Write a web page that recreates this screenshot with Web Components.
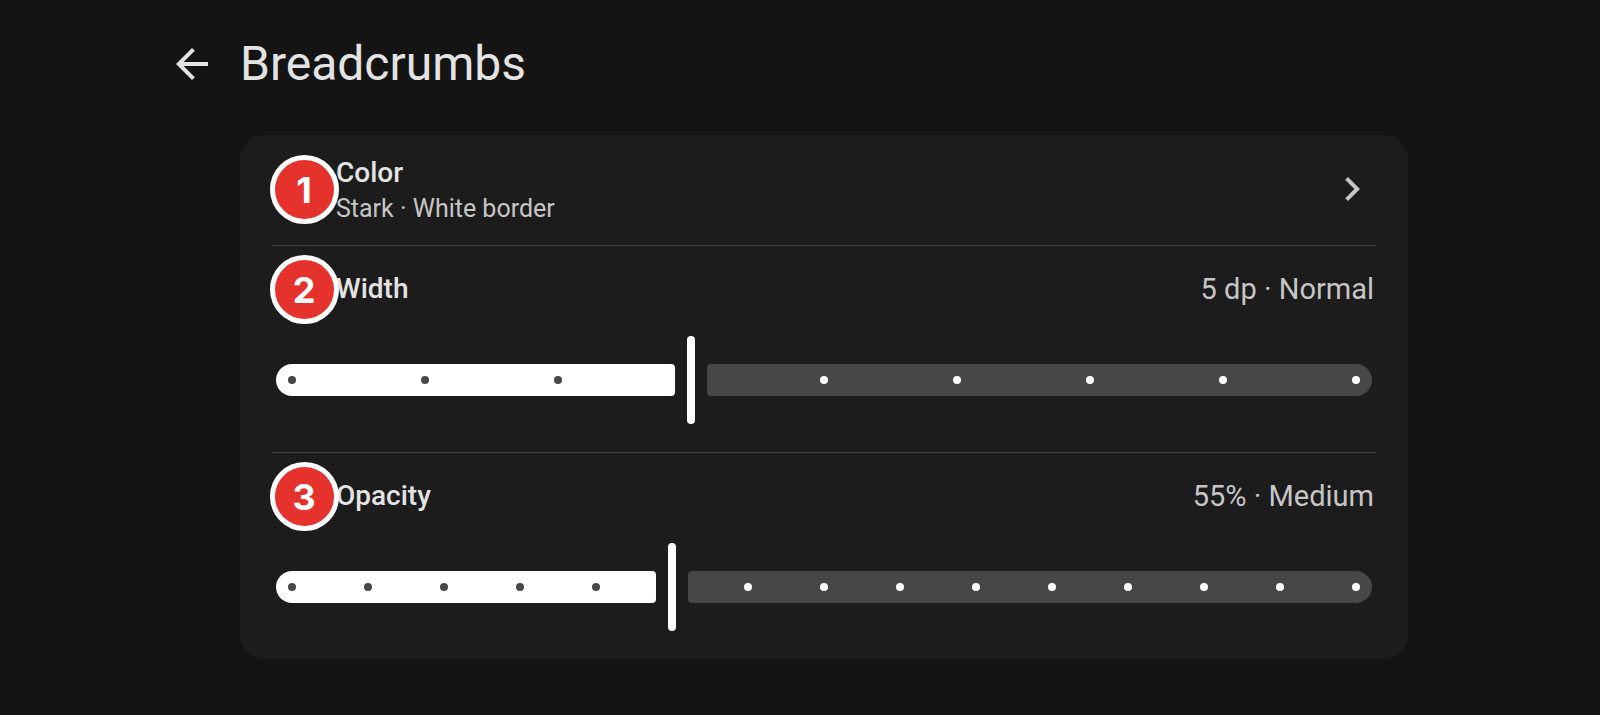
<!DOCTYPE html>
<html lang="en">
<head>
<meta charset="utf-8">
<meta name="viewport" content="width=device-width, initial-scale=1">
<title>Breadcrumbs</title>
<style>
  body { margin: 0; background: #141414; }
</style>
</head>
<body>
<settings-page heading="Breadcrumbs">
  <settings-card>
    <nav-row heading="Color" summary="Stark · White border">
      <step-badge slot="badge">1</step-badge>
    </nav-row>
    <slider-row heading="Width" min="2" max="10" step="1" value="5" unit=" dp" level="Normal">
      <step-badge slot="badge">2</step-badge>
    </slider-row>
    <slider-row heading="Opacity" min="30" max="100" step="5" value="55" unit="%" level="Medium">
      <step-badge slot="badge">3</step-badge>
    </slider-row>
  </settings-card>
</settings-page>

<script>
function makeTemplate(html) {
  const template = document.createElement("template");
  template.innerHTML = html;
  return template;
}

const pageTemplate = makeTemplate(`
  <style>
    :host {
      display: block;
      padding: 40px 12% 54px 10.5%;
      color: #e3e3e3;
      font-family: Roboto, "Liberation Sans", sans-serif;
    }
    header { display: flex; align-items: center; gap: 24px; margin-bottom: 47px; }
    button { width: 48px; height: 48px; padding: 0; border: 0; background: none; color: inherit; cursor: pointer; }
    svg { display: block; width: 48px; height: 48px; fill: currentColor; }
    h1 { margin: 0; font-size: 48px; line-height: 48px; font-weight: 400; }
    main { margin-left: 72px; }
  </style>
  <header>
    <button type="button" aria-label="Back">
      <svg viewBox="0 0 24 24"><path d="M20 11H7.83l5.59-5.59L12 4l-8 8 8 8 1.41-1.41L7.83 13H20z"/></svg>
    </button>
    <h1></h1>
  </header>
  <main><slot></slot></main>
`);

class SettingsPage extends HTMLElement {
  constructor() {
    super();
    this.attachShadow({ mode: "open" });
    this.shadowRoot.appendChild(pageTemplate.content.cloneNode(true));
  }

  connectedCallback() {
    this.shadowRoot.querySelector("h1").textContent = this.getAttribute("heading") ?? "";
  }
}

const cardTemplate = makeTemplate(`
  <style>
    :host { display: block; padding: 0 32px; border-radius: 24px; background: #1c1c1c; }
    ::slotted(:not(:first-child)) { border-top: 1px solid #444; }
  </style>
  <slot></slot>
`);

class SettingsCard extends HTMLElement {
  constructor() {
    super();
    this.attachShadow({ mode: "open" });
    this.shadowRoot.appendChild(cardTemplate.content.cloneNode(true));
  }
}

const badgeTemplate = makeTemplate(`
  <style>
    :host {
      display: flex;
      align-items: center;
      justify-content: center;
      flex: none;
      box-sizing: border-box;
      width: 69px;
      height: 69px;
      padding-top: 2px;
      border: 5px solid #fff;
      border-radius: 50%;
      background: #e6322d;
      color: #fff;
      font: 700 36px/40px Inter, "Liberation Sans", sans-serif;
    }
  </style>
  <slot></slot>
`);

class StepBadge extends HTMLElement {
  constructor() {
    super();
    this.attachShadow({ mode: "open" });
    this.shadowRoot.appendChild(badgeTemplate.content.cloneNode(true));
  }
}

const navRowTemplate = makeTemplate(`
  <style>
    :host { display: block; padding: 18px 0 20px; }
    button {
      display: flex;
      align-items: center;
      width: 100%;
      padding: 0;
      border: 0;
      background: none;
      color: inherit;
      font: inherit;
      text-align: left;
      cursor: pointer;
    }
    /* the badge is a little wider than its column and sits over the text edge */
    .lead { display: flex; align-items: center; justify-content: center; width: 64px; height: 64px; z-index: 1; }
    .text { flex: 1; min-width: 0; }
    .text span { display: block; }
    .heading { font-size: 28px; line-height: 40px; font-weight: 500; }
    .summary { font-size: 25px; line-height: 32px; color: #c6c6c6; }
    svg { flex: none; width: 48px; height: 48px; fill: #c6c6c6; }
  </style>
  <button type="button">
    <span class="lead"><slot name="badge"></slot></span>
    <span class="text"><span class="heading"></span><span class="summary"></span></span>
    <svg viewBox="0 0 24 24" aria-hidden="true"><path d="M10 6L8.59 7.41 13.17 12l-4.58 4.59L10 18l6-6z"/></svg>
  </button>
`);

class NavRow extends HTMLElement {
  constructor() {
    super();
    this.attachShadow({ mode: "open" });
    this.shadowRoot.appendChild(navRowTemplate.content.cloneNode(true));
  }

  connectedCallback() {
    this.shadowRoot.querySelector(".heading").textContent = this.getAttribute("heading") ?? "";
    this.shadowRoot.querySelector(".summary").textContent = this.getAttribute("summary") ?? "";
  }
}

const sliderRowTemplate = makeTemplate(`
  <style>
    :host { display: block; padding: 11px 0 28px; }
    .head { display: flex; align-items: center; margin-bottom: 15px; font-size: 28px; line-height: 40px; }
    .lead { display: flex; align-items: center; justify-content: center; width: 64px; height: 64px; z-index: 1; }
    label { flex: 1; font-weight: 500; }
    output { padding-right: 2px; font-size: 29px; color: #c6c6c6; }

    /* track, ticks and input share one grid cell */
    .slider { display: grid; align-items: center; margin: 0 4px; }
    .slider > * { grid-area: 1 / 1; }
    .track { display: flex; gap: 32px; height: 32px; }
    .active { border-radius: 16px 4px 4px 16px; background: #fff; }
    .rest { border-radius: 4px 16px 16px 4px; background: #474747; }
    .ticks { display: flex; justify-content: space-between; padding: 0 12px; }
    .ticks i { width: 8px; height: 8px; border-radius: 50%; background: #fff; }
    .ticks i.on { background: #474747; }
    input {
      appearance: none;
      -webkit-appearance: none;
      min-width: 0;
      height: 88px;
      margin: 0 12px;
      background: transparent;
      cursor: pointer;
    }
    input::-webkit-slider-thumb {
      -webkit-appearance: none;
      width: 8px;
      height: 88px;
      border-radius: 4px;
      background: #fff;
    }
    input::-moz-range-thumb {
      width: 8px;
      height: 88px;
      border: 0;
      border-radius: 4px;
      background: #fff;
    }
  </style>
  <div class="head">
    <span class="lead"><slot name="badge"></slot></span>
    <label for="range"></label>
    <output for="range"></output>
  </div>
  <div class="slider">
    <div class="track"><div class="active"></div><div class="rest"></div></div>
    <div class="ticks"></div>
    <input id="range" type="range">
  </div>
`);

class SliderRow extends HTMLElement {
  constructor() {
    super();
    this.attachShadow({ mode: "open" });
    this.shadowRoot.appendChild(sliderRowTemplate.content.cloneNode(true));
    this.$input = this.shadowRoot.querySelector("input");
    this.$ticks = this.shadowRoot.querySelector(".ticks");
    this.$input.addEventListener("input", () => this.#sync());
  }

  connectedCallback() {
    for (const name of ["min", "max", "step", "value"]) {
      this.$input[name] = this.getAttribute(name);
    }
    this.shadowRoot.querySelector("label").textContent = this.getAttribute("heading") ?? "";

    const { min, max, step } = this.$input;
    const count = (max - min) / step + 1;
    this.$ticks.replaceChildren();
    for (let n = 0; n < count; n++) {
      this.$ticks.appendChild(document.createElement("i"));
    }
    this.#sync();
  }

  #sync() {
    const { min, max, step, value } = this.$input;
    const index = (value - min) / step;
    const steps = (max - min) / step;
    this.shadowRoot.querySelector(".active").style.flexGrow = index;
    this.shadowRoot.querySelector(".rest").style.flexGrow = steps - index;
    [...this.$ticks.children].forEach((tick, n) => tick.classList.toggle("on", n < index));

    const unit = this.getAttribute("unit") ?? "";
    const level = this.getAttribute("level") ?? "";
    this.shadowRoot.querySelector("output").textContent = `${value}${unit} · ${level}`;
  }
}

customElements.define("step-badge", StepBadge);
customElements.define("nav-row", NavRow);
customElements.define("slider-row", SliderRow);
customElements.define("settings-card", SettingsCard);
customElements.define("settings-page", SettingsPage);
</script>
</body>
</html>
